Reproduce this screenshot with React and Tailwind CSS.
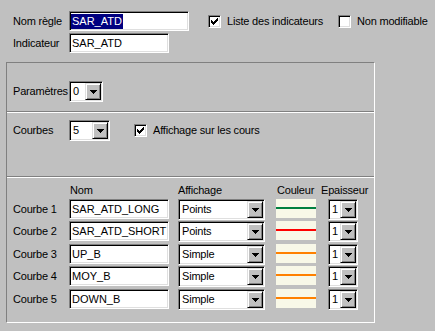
import clsx from 'clsx'

const sunken =
  'box-border border border-t-[#808080] border-l-[#808080] border-b-white border-r-white shadow-[inset_1px_1px_0_#000,inset_-1px_-1px_0_#dfdfdf] bg-white'
const raised =
  'box-border border border-t-[#dfdfdf] border-l-[#dfdfdf] border-b-black border-r-black shadow-[inset_1px_1px_0_#fff,inset_-1px_-1px_0_#808080] bg-[#c0c0c0]'

// pixel pattern of the classic check mark
const CHECK = [
  [6, 0], [5, 1], [6, 1], [0, 2], [4, 2], [5, 2], [6, 2],
  [0, 3], [1, 3], [3, 3], [4, 3], [5, 3], [0, 4], [1, 4], [2, 4],
  [3, 4], [4, 4], [1, 5], [2, 5], [3, 5], [2, 6],
]

function Checkbox({ checked, label, className }) {
  return (
    <div className={clsx('flex items-center', className)}>
      <div className={clsx(sunken, 'w-[13px] h-[13px] shrink-0 flex items-center justify-center')}>
        {checked && (
          <svg width="7" height="7" viewBox="0 0 7 7" shapeRendering="crispEdges">
            {CHECK.map(([x, y]) => (
              <rect key={`${x}-${y}`} x={x} y={y} width="1" height="1" fill="#000" />
            ))}
          </svg>
        )}
      </div>
      <span className="ml-[6px] whitespace-nowrap">{label}</span>
    </div>
  )
}

function Field({ children, className }) {
  return (
    <div className={clsx(sunken, 'flex items-center pl-[2px] whitespace-nowrap overflow-hidden', className)}>
      {children}
    </div>
  )
}

function Dropdown({ value, className }) {
  return (
    <div className={clsx(sunken, 'flex p-[1px]', className)}>
      <span className="flex-1 flex items-center pl-[2px] whitespace-nowrap overflow-hidden">{value}</span>
      <div className={clsx(raised, 'w-[16px] shrink-0 flex items-center justify-center')}>
        <svg width="7" height="4" viewBox="0 0 7 4" shapeRendering="crispEdges">
          <polygon points="0,0 7,0 3.5,4" fill="#000" />
        </svg>
      </div>
    </div>
  )
}

const courbes = [
  { nom: 'SAR_ATD_LONG', aff: 'Points', color: '#008040', mt: 'mt-0' },
  { nom: 'SAR_ATD_SHORT', aff: 'Points', color: '#ff0000', mt: 'mt-[1px]' },
  { nom: 'UP_B', aff: 'Simple', color: '#ff8000', mt: 'mt-[2px]' },
  { nom: 'MOY_B', aff: 'Simple', color: '#ff8000', mt: 'mt-[1px]' },
  { nom: 'DOWN_B', aff: 'Simple', color: '#ff8000', mt: 'mt-[2px]' },
]

export default function App() {
  return (
    <div className="w-[435px] h-[331px] bg-[#c0c0c0] overflow-hidden text-[11px] leading-[13px] text-black font-['Liberation_Sans',Arial,sans-serif] tracking-[-0.2px]">
      {/* ── Header fields ── */}
      <div className="pt-[11px] pl-[13px]">
        <div className="flex items-center h-[20px]">
          <span className="w-[56px]">Nom règle</span>
          <Field className="w-[120px] h-[20px] !pl-[1px]">
            <span className="bg-[#000080] text-white px-[1px] leading-[15px] tracking-normal">SAR_ATD</span>
          </Field>
          <Checkbox checked label="Liste des indicateurs" className="ml-[19px] w-[130px]" />
          <Checkbox label="Non modifiable" />
        </div>
        <div className="flex items-center h-[20px] mt-[2px]">
          <span className="w-[56px]">Indicateur</span>
          <Field className="w-[100px] h-[20px] tracking-normal">SAR_ATD</Field>
        </div>
      </div>

      {/* ── Etched frame ── */}
      <div className="ml-[6px] mt-[9px] w-[369px] h-[261px] border border-t-[#808080] border-l-[#808080] border-b-white border-r-white">
        <div className="h-[49px] border-b border-[#808080] pl-[6px] pt-[18px]">
          <div className="flex items-center">
            <span className="w-[56px]">Paramètres</span>
            <Dropdown value="0" className="w-[34px] h-[21px]" />
          </div>
        </div>

        <div className="h-[65px] border-t border-b border-t-white border-b-[#808080] pl-[6px] pt-[7px]">
          <div className="flex items-center">
            <span className="w-[56px]">Courbes</span>
            <Dropdown value="5" className="w-[41px] h-[21px]" />
            <Checkbox checked label="Affichage sur les cours" className="ml-[24px]" />
          </div>
        </div>

        <div className="h-[145px] border-t border-white pl-[6px] pt-[6px]">
          <div className="flex h-[13px]">
            <span className="w-[57px]" />
            <span className="w-[108px]">Nom</span>
            <span className="w-[99px]">Affichage</span>
            <span className="w-[44px]">Couleur</span>
            <span>Epaisseur</span>
          </div>
          <div className="mt-[2px]">
            {courbes.map((c, i) => (
              <div key={c.nom} className={clsx('flex items-start', c.mt)}>
                <span className="w-[56px] h-[20px] flex items-center">Courbe {i + 1}</span>
                <div className="w-[109px]">
                  <Field className="w-[100px] h-[20px] tracking-normal">{c.nom}</Field>
                </div>
                <div className="w-[98px]">
                  <Dropdown value={c.aff} className="w-[87px] h-[21px]" />
                </div>
                <div className="w-[52px]">
                  <div className="w-[40px] h-[19px] bg-[#f8f8e8] pt-[8px]">
                    <div className="h-[2px]" style={{ background: c.color }} />
                  </div>
                </div>
                <Dropdown value="1" className="w-[30px] h-[21px] !tracking-normal" />
              </div>
            ))}
          </div>
        </div>
      </div>
    </div>
  )
}
